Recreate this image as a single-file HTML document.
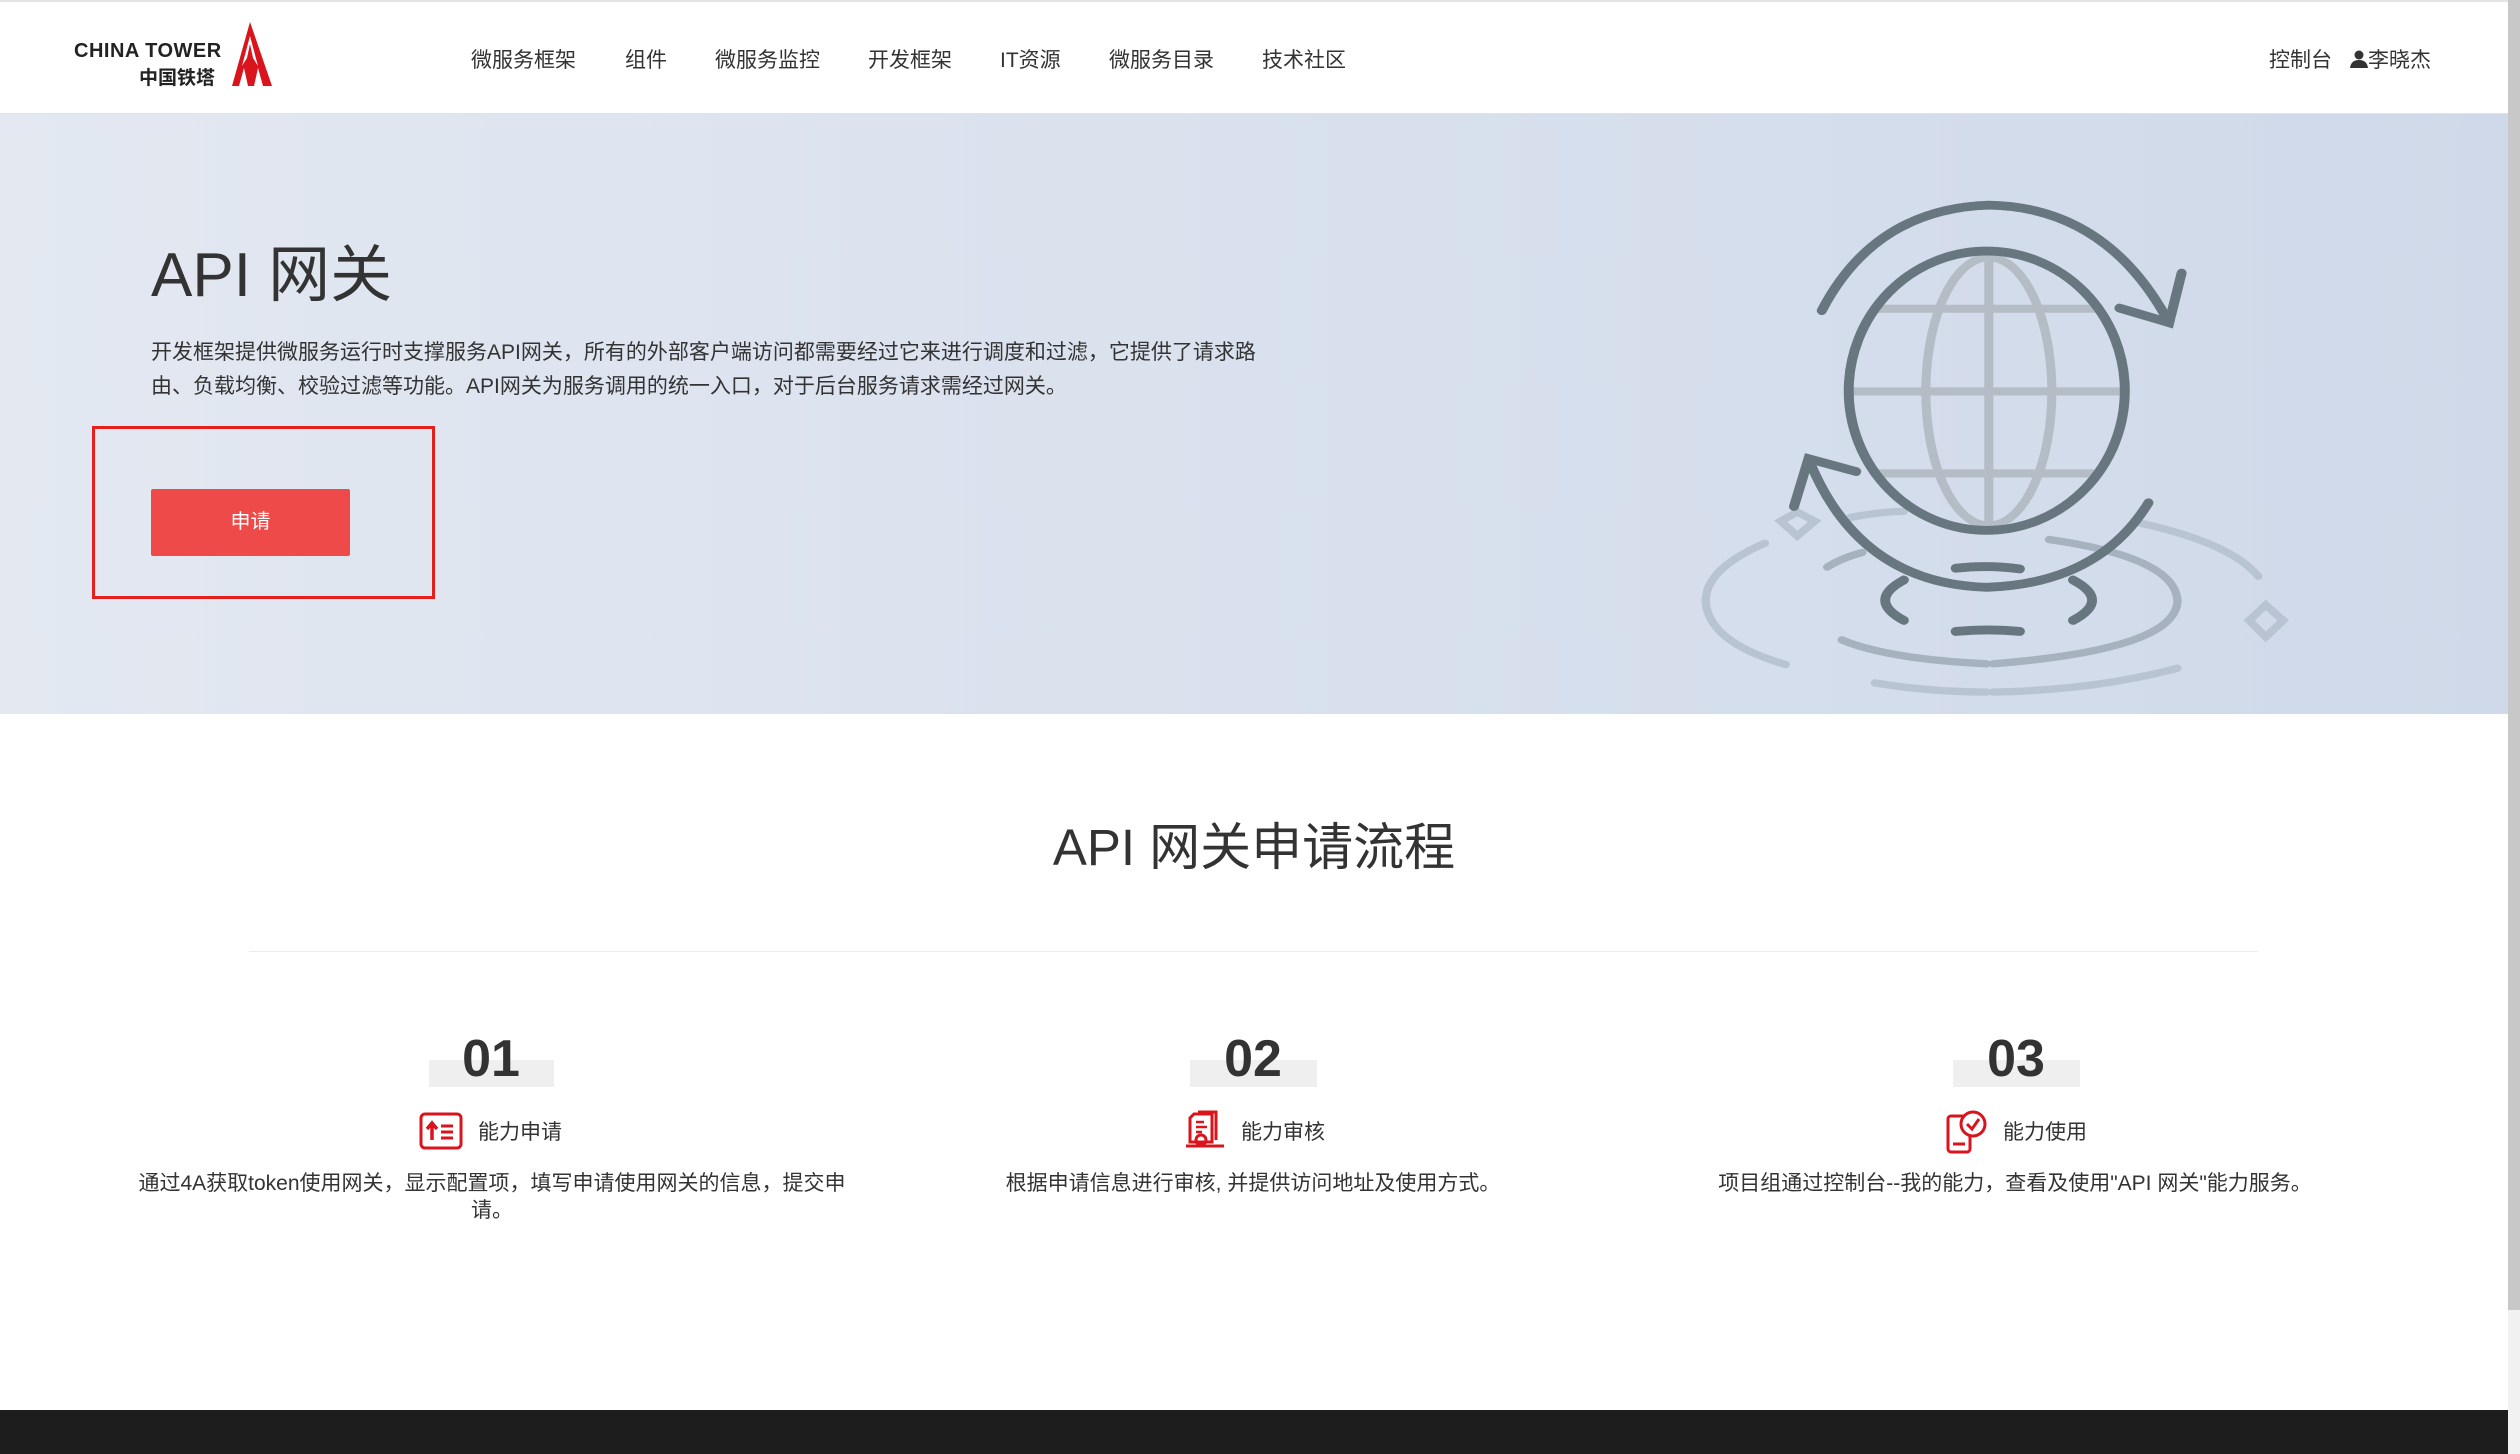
<!DOCTYPE html>
<html><head><meta charset="utf-8">
<style>
*{margin:0;padding:0;box-sizing:border-box}
html,body{width:2520px;height:1454px;overflow:hidden;background:#fff;font-family:"Liberation Sans","Noto Sans CJK SC",sans-serif;color:#333}
.abs{position:absolute}
#hdr{position:absolute;left:0;top:0;width:2508px;height:114px;background:#fff;border-top:2px solid #e4e4e4;border-bottom:1px solid #dde3ec}
.nav{position:absolute;top:42px;font-size:21px;color:#333;white-space:nowrap}
#hero{position:absolute;left:0;top:114px;width:2508px;height:600px;background:linear-gradient(90deg,#e3e8f1 0%,#d9e1ee 50%,#cfd9e9 100%)}
#sb{position:absolute;left:2508px;top:0;width:12px;height:1454px;background:#f1f1f1}
#sb div{width:12px;height:1310px;background:#c8c8c8}
.num{position:absolute;font-size:52px;font-weight:bold;color:#333;text-align:center;width:300px}
.bar{position:absolute;height:27px;background:#efefef}
.lbl{position:absolute;font-size:21px;color:#333;white-space:nowrap}
.desc{position:absolute;font-size:21px;color:#333;text-align:center;line-height:27px}
</style></head><body>
<div id="hdr">
  <div class="abs" style="left:74px;top:38px;font-size:20px;font-weight:bold;color:#222;letter-spacing:0.5px">CHINA TOWER</div>
  <div class="abs" style="left:139px;top:61px;font-size:19px;font-weight:bold;color:#222">中国铁塔</div>
  <svg class="abs" style="left:230px;top:20px" width="44" height="66" viewBox="0 0 44 66">
    <path d="M20 0 L2 64 L9 64 L14 46 L18 64 L24 64 L28 46 L33 64 L42 64 Z" fill="#d9141c"/>
    <path d="M20 14 L12 44 L17 36 L20 22 L23 36 L28 44 Z" fill="#fff"/>
  </svg>
  <div class="nav" style="left:471px">微服务框架</div>
  <div class="nav" style="left:625px">组件</div>
  <div class="nav" style="left:715px">微服务监控</div>
  <div class="nav" style="left:868px">开发框架</div>
  <div class="nav" style="left:1000px">IT资源</div>
  <div class="nav" style="left:1109px">微服务目录</div>
  <div class="nav" style="left:1262px">技术社区</div>
  <div class="nav" style="left:2269px">控制台</div>
  <div class="nav" style="left:2350px"><svg width="18" height="18" viewBox="0 0 18 18" style="vertical-align:-1px"><circle cx="9" cy="5" r="4.5" fill="#333"/><path d="M0 18 Q1 10 9 10 Q17 10 18 18Z" fill="#333"/></svg>李晓杰</div>
</div>
<div id="hero">
  <div class="abs" style="left:151px;top:110px;font-size:62px;color:#333">API 网关</div>
  <div class="abs" style="left:151px;top:222px;width:1120px;font-size:21px;line-height:34px;color:#333">开发框架提供微服务运行时支撑服务API网关，所有的外部客户端访问都需要经过它来进行调度和过滤，它提供了请求路由、负载均衡、校验过滤等功能。API网关为服务调用的统一入口，对于后台服务请求需经过网关。</div>
  <div class="abs" style="left:92px;top:312px;width:343px;height:173px;border:3px solid #e61e1e"></div>
  <div class="abs" style="left:151px;top:375px;width:199px;height:67px;background:#ef4a4a;border-radius:2px;color:#fff;font-size:20px;text-align:center;line-height:67px">申请</div>
  <svg class="abs" style="left:1680px;top:36px" width="650" height="570" viewBox="0 0 1568 1551" preserveAspectRatio="none" fill="none" stroke-linecap="round">
    <g stroke="#b4bcc6" stroke-width="22">
      <line x1="470" y1="432" x2="1000" y2="432"/>
      <line x1="420" y1="657" x2="1065" y2="657"/>
      <line x1="470" y1="880" x2="1000" y2="880"/>
      <line x1="745" y1="290" x2="745" y2="1025"/>
      <ellipse cx="745" cy="657" rx="152" ry="365"/>
    </g>
    <g stroke="#b9c4d2" stroke-width="20">
      <path d="M205 1070 Q60 1140 62 1230 Q70 1340 255 1400"/>
      <path d="M1110 1015 Q1330 1070 1395 1160"/>
      <path d="M410 1000 Q480 985 540 983"/>
      <path d="M470 1450 Q600 1475 740 1475 M755 1475 Q1000 1470 1200 1410"/>
      <path d="M283 985 L325 1010 L283 1050 L243 1010 Z"/>
      <path d="M1413 1238 L1455 1280 L1413 1325 L1373 1280 Z"/>
    </g>
    <g stroke="#a7b2bf" stroke-width="20">
      <path d="M355 1135 Q390 1110 440 1095"/>
      <path d="M890 1060 Q1200 1110 1200 1230 Q1190 1360 755 1398 M740 1398 Q500 1385 390 1333"/>
    </g>
    <g stroke="#68767f" stroke-width="24">
      <ellipse cx="740" cy="655" rx="333" ry="380"/>
      <path d="M342 437 Q470 160 745 150 Q1030 155 1180 470"/>
      <path d="M1060 430 L1180 470 L1210 335"/>
      <path d="M310 840 Q430 1180 740 1190 Q1010 1180 1130 960"/>
      <path d="M425 875 L310 840 L275 970"/>
      <path d="M665 1138 Q745 1128 820 1140"/>
      <path d="M665 1310 Q745 1302 820 1310"/>
      <path d="M540 1170 Q450 1225 540 1280"/>
      <path d="M948 1170 Q1040 1225 948 1280"/>
    </g>
  </svg>
</div>
<div class="abs" style="left:0;top:806px;width:2508px;text-align:center;font-size:51px;color:#333">API 网关申请流程</div>
<div class="abs" style="left:249px;top:951px;width:2009px;height:1px;background:#ececec"></div>

<div class="bar" style="left:429px;top:1060px;width:125px"></div>
<div class="num" style="left:341px;top:1029px">01</div>
<svg class="abs" style="left:419px;top:1112px" width="44" height="38" viewBox="0 0 44 38"><rect x="2" y="2" width="40" height="34" rx="4" fill="none" stroke="#d9141c" stroke-width="3"/><path d="M13 28 V12 M8 17 L13 11 L18 17" stroke="#d9141c" stroke-width="3.5" fill="none"/><path d="M22 14 H34 M22 20 H34 M22 26 H34" stroke="#d9141c" stroke-width="3"/></svg>
<div class="lbl" style="left:478px;top:1116px">能力申请</div>
<div class="desc" style="left:130px;top:1170px;width:724px">通过4A获取token使用网关，显示配置项，填写申请使用网关的信息，提交申请。</div>

<div class="bar" style="left:1190px;top:1060px;width:127px"></div>
<div class="num" style="left:1103px;top:1029px">02</div>
<svg class="abs" style="left:1186px;top:1110px" width="40" height="42" viewBox="0 0 40 42"><path d="M8 4 H26 V32 H4 V8 Z" fill="none" stroke="#d9141c" stroke-width="3"/><path d="M12 2 H30 V30" fill="none" stroke="#d9141c" stroke-width="3"/><path d="M10 12 H18 M10 17 H21 M10 22 H16" stroke="#d9141c" stroke-width="2.5"/><circle cx="15" cy="30" r="5" fill="none" stroke="#d9141c" stroke-width="3"/><path d="M0 36 H38" stroke="#d9141c" stroke-width="3"/></svg>
<div class="lbl" style="left:1241px;top:1116px">能力审核</div>
<div class="desc" style="left:853px;top:1170px;width:800px">根据申请信息进行审核, 并提供访问地址及使用方式。</div>

<div class="bar" style="left:1953px;top:1060px;width:127px"></div>
<div class="num" style="left:1866px;top:1029px">03</div>
<svg class="abs" style="left:1945px;top:1110px" width="44" height="44" viewBox="0 0 44 44"><rect x="3" y="6" width="22" height="36" rx="3" fill="none" stroke="#d9141c" stroke-width="3"/><path d="M8 34 H20" stroke="#d9141c" stroke-width="3"/><circle cx="28" cy="14" r="12" fill="#fff" stroke="#d9141c" stroke-width="3"/><path d="M22 14 L27 19 L34 9" fill="none" stroke="#d9141c" stroke-width="3"/></svg>
<div class="lbl" style="left:2003px;top:1116px">能力使用</div>
<div class="desc" style="left:1615px;top:1170px;width:800px">项目组通过控制台--我的能力，查看及使用"API 网关"能力服务。</div>

<div class="abs" style="left:0;top:1410px;width:2508px;height:44px;background:#1d1d1d"></div>
<div id="sb"><div></div></div>
</body></html>
